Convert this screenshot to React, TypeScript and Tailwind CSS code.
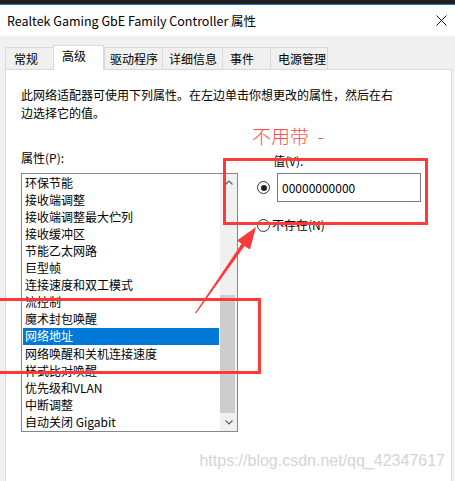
const items = [
  "环保节能",
  "接收端调整",
  "接收端调整最大伫列",
  "接收缓冲区",
  "节能乙太网路",
  "巨型帧",
  "连接速度和双工模式",
  "流控制",
  "魔术封包唤醒",
  "网络地址",
  "网络唤醒和关机连接速度",
  "样式比对唤醒",
  "优先级和VLAN",
  "中断调整",
  "自动关闭 Gigabit",
];

const tabs = [
  { label: "常规", w: "w-[48px]", pl: "pl-[8px]" },
  { label: "高级", w: "w-[51px]", pl: "pl-[8px]", active: true },
  { label: "驱动程序", w: "w-[58px]", pl: "pl-[5px]" },
  { label: "详细信息", w: "w-[60px]", pl: "pl-[6px]" },
  { label: "事件", w: "w-[48px]", pl: "pl-[7px]" },
  { label: "电源管理", w: "w-[58px]", pl: "pl-[7px]" },
];

const Radio = ({ checked }: { checked?: boolean }) => (
  <div className="w-[13px] h-[13px] rounded-full border border-[#333] bg-white flex items-center justify-center shrink-0">
    {checked && <div className="w-[6px] h-[6px] rounded-full bg-[#222]" />}
  </div>
);

const Chevron = ({ down }: { down?: boolean }) => (
  <svg width="8" height="5" viewBox="0 0 8 5">
    <polyline
      points={down ? "0.5,0.5 4,4 7.5,0.5" : "0.5,4.5 4,1 7.5,4.5"}
      fill="none"
      stroke="#606060"
      strokeWidth="1.2"
    />
  </svg>
);

export default function App() {
  return (
    <div className="relative w-[455px] h-[481px] overflow-hidden bg-[#f0f0f0] text-black text-[12px] font-['Noto_Sans_CJK_SC',sans-serif]">
      {/* window chrome */}
      <div className="h-[4px] bg-[#1f1f1f]" />
      <div className="h-[1px] bg-[#1c78d0]" />
      <div className="h-[31px] bg-white flex items-center justify-between pl-[7px] pr-[7px]">
        <span className="text-[12.5px] leading-[16px]">Realtek Gaming GbE Family Controller 属性</span>
        <svg width="11" height="11" viewBox="0 0 11 11" className="mr-[1px]">
          <path d="M0.5 0.5 L10.5 10.5 M10.5 0.5 L0.5 10.5" stroke="#111" strokeWidth="1" />
        </svg>
      </div>

      <div className="pt-[9px]">
        {/* tabs */}
        <div className="flex items-end h-[24px] pl-[5px]">
          {tabs.map((t, i) =>
            t.active ? (
              <div
                key={t.label}
                className={`relative z-10 -mb-px h-[25px] bg-white border-t border-l border-r border-[#d9d9d9] leading-[20px] ${t.w} ${t.pl}`}
              >
                {t.label}
              </div>
            ) : (
              <div
                key={t.label}
                className={`h-[22px] bg-[#f0f0f0] border-t border-l border-[#d9d9d9] leading-[21px] ${i === tabs.length - 1 ? "border-r" : ""} ${t.w} ${t.pl}`}
              >
                {t.label}
              </div>
            )
          )}
        </div>

        {/* panel */}
        <div className="ml-[5px] mr-[3px] h-[420px] bg-white border border-[#d9d9d9] pl-[15px] pt-[16px]">
          <div className="leading-[18px]">
            <div>此网络适配器可使用下列属性。在左边单击你想更改的属性，然后在右</div>
            <div>边选择它的值。</div>
          </div>

          <div className="flex mt-[28px]">
            {/* left column */}
            <div className="w-[217px]">
              <div className="leading-[16px]">属性(P):</div>
              <div className="mt-[7px] h-[259px] border border-[#828790] flex">
                <div className="flex-1 p-px">
                  {items.map((it) => (
                    <div
                      key={it}
                      className={`h-[17px] leading-[16px] pl-[2px] ${it === "网络地址" ? "bg-[#0078d7] text-white h-[16px] mb-px" : ""}`}
                    >
                      {it}
                    </div>
                  ))}
                </div>
                <div className="w-[17px] bg-[#f0f0f0] flex flex-col">
                  <div className="h-[17px] flex items-center justify-center">
                    <Chevron />
                  </div>
                  <div className="flex-1 flex flex-col">
                    <div className="h-[104px]" />
                    <div className="h-[118px] mr-[2px] bg-[#cdcdcd]" />
                  </div>
                  <div className="h-[17px] flex items-center justify-center">
                    <Chevron down />
                  </div>
                </div>
              </div>
            </div>

            {/* right column */}
            <div className="ml-[19px] pt-[3px]">
              <div className="leading-[16px] pl-[16px]">值(V):</div>
              <div className="mt-[4px] flex items-center">
                <Radio checked />
                <div className="ml-[7px] w-[144px] h-[29px] border border-[#7a7a7a] pl-[4px] flex items-center text-[12px]">
                  00000000000
                </div>
              </div>
              <div className="mt-[16px] h-[14px] flex items-center">
                <Radio />
                <span className="ml-[2px] leading-[14px]">不存在(N)</span>
              </div>
            </div>
          </div>
        </div>
      </div>

      {/* annotations */}
      <div className="absolute left-[252px] top-[124px] text-[19px] leading-[24px] font-light text-[#ff4d4d]">
        不用带&nbsp;&nbsp;-
      </div>
      <div className="absolute left-[223px] top-[158px] w-[205px] h-[67px] border-[3px] border-[#fd3a3a]" />
      <div className="absolute left-[-6px] top-[298px] w-[267px] h-[76px] border-[3px] border-[#fd3a3a]" />
      <svg className="absolute left-0 top-0 pointer-events-none" width="455" height="481" viewBox="0 0 455 481">
        <polygon
          points="195,313 241.6,243.7 237,240.4 256,227 250,249.6 244.6,246.1 196,313.6"
          fill="#fd3a3a"
        />
      </svg>
      <div className="absolute right-[10px] top-[451px] text-[16px] leading-[20px] text-[#d4d4d4] font-['Liberation_Sans',sans-serif]">
        https://blog.csdn.net/qq_42347617
      </div>
    </div>
  );
}
